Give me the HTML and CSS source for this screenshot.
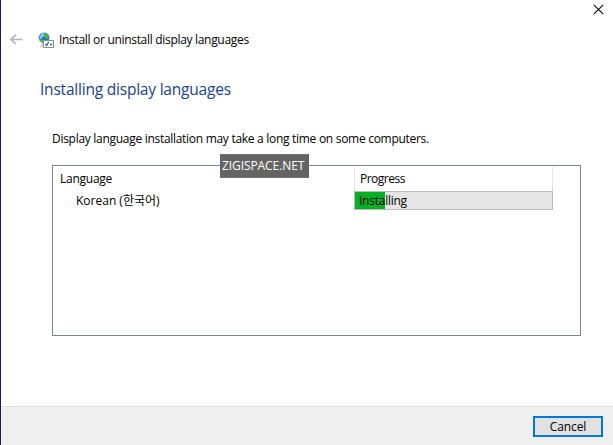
FILE: index.html
```html
<!DOCTYPE html>
<html lang="en">
<head>
<meta charset="utf-8">
<title>Install or uninstall display languages</title>
<link rel="stylesheet" href="styles.css">
</head>
<body>
<main class="window">
  <div class="titlebar">
    <svg class="close" width="11" height="11" viewBox="0 0 11 11"><path d="M.8.8l9.4 9.4M10.2.8L.8 10.2"/></svg>
  </div>
  <header class="nav">
    <svg class="back" width="13" height="12" viewBox="0 0 13 12"><path d="M5.7.8L1 5.5l4.7 4.7M1.2 5.5H12.5"/></svg>
    <svg class="globe" width="16" height="16" viewBox="0 0 16 16">
      <path fill="#d4d4d4" d="M3 12l4-1 2 4.5H2z"/>
      <circle cx="6" cy="6" r="5.8" fill="#b4cbdc"/>
      <circle cx="6.2" cy="5.8" r="5" fill="#2376bd"/>
      <path fill="#8fcbed" d="M2 4l3-3 2 1-2 3-3 2z"/>
      <path fill="#48b642" d="M6.5 1l3 1 1.3 3-2 2-2-1-.5-2zM2 7l3 1 1 1-1 2-2.5-2z"/>
      <path fill="#fff" stroke="#8a8f94" d="M5.5 8.5h10v7h-10z"/>
      <path fill="none" stroke="#2466aa" stroke-width="1.3" d="M7.5 12l1.2 1.6 2-3.8M12 12.5h2"/>
    </svg>
    <span class="nav-title">Install or uninstall display languages</span>
  </header>
  <section class="content">
    <h1>Installing display languages</h1>
    <p class="note">Display language installation may take a long time on some computers.</p>
    <div class="list">
      <div class="watermark"><span>ZIGISPACE.NET</span></div>
      <div class="row head">
        <div class="cell"><span>Language</span></div>
        <div class="cell progress-head"><span>Progress</span></div>
      </div>
      <div class="row">
        <div class="cell name"><span>Korean (한국어)</span></div>
        <div class="bar"><span>Installing</span></div>
      </div>
    </div>
  </section>
  <footer class="footer"><button class="cancel">Cancel</button></footer>
</main>
</body>
</html>
```
FILE: styles.css
```css
* { box-sizing: border-box; }
body {
  margin: 0;
  font: 12px/16px "Open Sans", "Noto Sans CJK KR", sans-serif;
  color: #000;
}
span, p, h1 { white-space: nowrap; }
.window {
  height: 445px;
  display: flex;
  flex-direction: column;
  border-left: 1px solid #0b2748;
  background: #fff;
  overflow: hidden;
}
.titlebar {
  height: 28px;
  display: flex;
  justify-content: flex-end;
  padding: 4px 9px 0 0;
}
.close path { fill: none; stroke: #111; stroke-width: 1.2; }
.nav {
  height: 24px;
  display: flex;
  align-items: center;
  padding-left: 9px;
}
.back path { fill: none; stroke: #b6b6b6; stroke-width: 1.7; }
.globe { margin-left: 15px; }
.nav-title { margin-left: 5px; letter-spacing: -.31px; }
.content { flex: 1; padding: 27px 32px 0 39px; }
h1 {
  margin: 0;
  font-size: 15.5px;
  line-height: 20px;
  font-weight: 400;
  color: #19438c;
  letter-spacing: -.21px;
}
.note { margin: 32px 0 0 12px; letter-spacing: -.29px; }
.list {
  position: relative;
  height: 171px;
  margin: 18px 0 0 12px;
  border: 1px solid #7f868a;
}
.row {
  display: grid;
  grid-template-columns: 301px 199px;
  height: 19px;
}
.row.head { height: 25px; padding-top: 1px; }
.cell { padding: 4px 0 0 7px; letter-spacing: -.25px; }
.cell.name { padding: 2px 0 0 23px; letter-spacing: 0; }
.cell.progress-head {
  padding-left: 5px;
  border: solid #e3e3e3;
  border-width: 0 1px;
  letter-spacing: -.5px;
}
.bar {
  height: 19px;
  padding: 1px 0 0 4px;
  border: 1px solid #bcbcbc;
  background: linear-gradient(to right, #06b025 30px, #e6e6e6 30px);
  letter-spacing: -.25px;
}
.watermark {
  position: absolute;
  left: 167px;
  top: -12px;
  width: 89px;
  height: 24px;
  padding: 3px 2px;
  border: 1px solid #747474;
  border-width: 1px 0;
  background: #646464;
  color: #fff;
  letter-spacing: -.08px;
}
.footer {
  height: 39px;
  display: flex;
  justify-content: flex-end;
  padding: 9px 10px 0 0;
  border-top: 1px solid #dfdfdf;
  background: #f0f0f0;
}
.cancel {
  width: 70px;
  height: 21px;
  padding: 0;
  border: 2px solid #0078d7;
  background: #e1e1e1;
  font: inherit;
  letter-spacing: -.1px;
  color: #000;
}
```
